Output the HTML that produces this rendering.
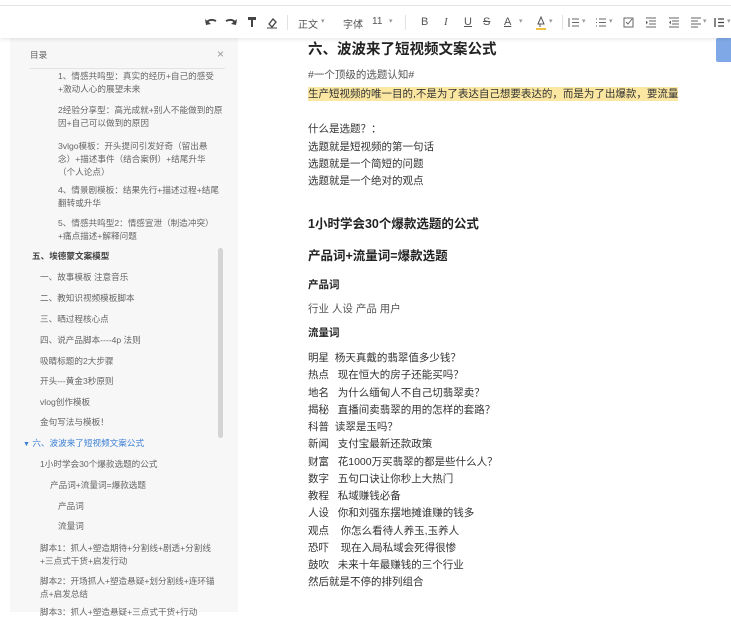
<!DOCTYPE html>
<html><head><meta charset="utf-8"><style>
*{margin:0;padding:0;box-sizing:border-box}
body{width:731px;height:612px;overflow:hidden;background:#fff;font-family:"Liberation Sans","Noto Sans CJK SC",sans-serif;position:relative}
.top{position:absolute;left:0;top:5px;width:731px;height:33px;background:#fff;border-top:1px solid #e4e4e4;box-shadow:0 2px 3px rgba(0,0,0,.08);z-index:2}
.t{position:absolute;top:10px;font-size:10px;color:#555;white-space:nowrap}
.dd{position:absolute;top:11px;font-size:7px;color:#999}
.sep{position:absolute;top:9px;width:1px;height:15px;background:#e2e2e2}
.side{position:absolute;left:10px;top:38px;width:228px;height:574px;background:#f7f7f7}
.s{position:absolute;font-size:8.6px;color:#666;line-height:13px;white-space:nowrap}
.thumb{position:absolute;left:208px;top:210px;width:5px;height:190px;border-radius:3px;background:#d4d4d4}
.m{position:absolute;left:308px;font-size:10.5px;color:#333;white-space:nowrap;line-height:14px}
.blue{position:absolute;left:716px;top:38px;width:15px;height:24px;background:#7fa9e6;border-radius:2px 0 0 2px}
.ic{position:absolute;top:11px}
</style></head><body>
<div class="top">
<svg class="ic" style="left:204px;top:10px" width="14" height="12"><path d="M2 7 Q6 2 12 5" stroke="#444" stroke-width="2" fill="none"/><path d="M1 3 L2 9 L7 8Z" fill="#444"/></svg>
<svg class="ic" style="left:224px;top:10px" width="14" height="12"><path d="M12 7 Q8 2 2 5" stroke="#444" stroke-width="2" fill="none"/><path d="M13 3 L12 9 L7 8Z" fill="#444"/></svg>
<svg class="ic" style="left:247px;top:10px" width="10" height="13"><rect x="1" y="1" width="8" height="3" fill="#444"/><rect x="4" y="4" width="2" height="7" fill="#444"/></svg>
<svg class="ic" style="left:266px;top:10px" width="12" height="13"><path d="M3 8 L7 3 L10 6 L6 11Z" stroke="#444" fill="none" stroke-width="1.3"/><path d="M1 12 H11" stroke="#444"/></svg>
<div class="sep" style="left:287px"></div>
<div class="t" style="left:298px">正文</div><div class="dd" style="left:321px">▾</div>
<div class="t" style="left:343px">字体</div><div class="dd" style="left:359px">▾</div>
<div class="t" style="left:372px">11</div><div class="dd" style="left:389px">▾</div>
<div class="sep" style="left:405px"></div>
<div class="t" style="left:421px;font-size:11px">B</div>
<div class="t" style="left:444px;font-size:11px;font-style:italic;font-family:'Liberation Serif',serif">I</div>
<div class="t" style="left:464px;font-size:11px;text-decoration:underline">U</div>
<div class="t" style="left:483px;font-size:11px;text-decoration:line-through">S</div>
<div class="t" style="left:504px;font-size:11px;text-decoration:underline">A</div><div class="dd" style="left:519px">▾</div>
<svg class="ic" style="left:535px;top:9px" width="12" height="15"><path d="M3 9 L6 2 L9 9Z M5 9 V12" stroke="#555" fill="none"/><path d="M1 14 H11" stroke="#f0c040" stroke-width="2"/></svg><div class="dd" style="left:549px">▾</div>
<div class="sep" style="left:562px"></div>
<svg class="ic" style="left:568px" width="12" height="11"><path d="M1 1V10M4 2H11M4 5.5H11M4 9H11" stroke="#666"/></svg><div class="dd" style="left:582px">▾</div>
<svg class="ic" style="left:595px" width="12" height="11"><path d="M1 2H2M1 5.5H2M1 9H2M4 2H11M4 5.5H11M4 9H11" stroke="#666"/></svg><div class="dd" style="left:609px">▾</div>
<svg class="ic" style="left:623px" width="11" height="11"><rect x="1" y="1" width="9" height="9" stroke="#666" fill="none"/><path d="M3 5L5 7L9 2" stroke="#666" fill="none"/></svg>
<svg class="ic" style="left:645px" width="12" height="11"><path d="M1 1H11M4 4H11M4 7H11M1 10H11" stroke="#666"/><path d="M1 3.5L3 5.5L1 7.5Z" fill="#666"/></svg>
<svg class="ic" style="left:668px" width="12" height="11"><path d="M1 1H11M4 4H11M4 7H11M1 10H11" stroke="#666"/><path d="M3 3.5L1 5.5L3 7.5Z" fill="#666"/></svg>
<svg class="ic" style="left:690px" width="12" height="11"><path d="M1 1H11M1 4H8M1 7H11M1 10H8" stroke="#666"/></svg><div class="dd" style="left:703px">▾</div>
<svg class="ic" style="left:713px" width="12" height="11"><path d="M2 1V10M5 2H11M5 5.5H11M5 9H11" stroke="#444" stroke-width="1.3"/></svg><div class="dd" style="left:727px">▾</div>
</div>
<div class="blue"></div>
<div class="side">
<div class="s" style="left:20px;top:11px">目录</div>
<div class="s" style="left:207px;top:10px;font-size:12px;color:#999">×</div>
<div style="position:absolute;left:20px;top:30px;width:195px;height:1px;background:#e3e3e3"></div>
<div class="s" style="left:48px;top:32px">1、情感共鸣型：真实的经历+自己的感受<br>+激动人心的展望未来</div>
<div class="s" style="left:48px;top:66px">2经验分享型：高光成就+别人不能做到的原<br>因+自己可以做到的原因</div>
<div class="s" style="left:48px;top:102px">3vlgo模板：开头提问引发好奇（留出悬<br>念）+描述事件（结合案例）+结尾升华<br>（个人论点）</div>
<div class="s" style="left:48px;top:146px">4、情景剧模板：结果先行+描述过程+结尾<br>翻转或升华</div>
<div class="s" style="left:48px;top:179px">5、情感共鸣型2：情感宣泄（制造冲突）<br>+痛点描述+解释问题</div>
<div class="s" style="left:22px;top:212px;font-weight:bold;color:#444">五、埃德蒙文案模型</div>
<div class="s" style="left:30px;top:233px">一、故事模板 注意音乐</div>
<div class="s" style="left:30px;top:254px">二、教知识视频模板脚本</div>
<div class="s" style="left:30px;top:275px">三、晒过程核心点</div>
<div class="s" style="left:30px;top:296px">四、说产品脚本----4p 法则</div>
<div class="s" style="left:30px;top:317px">吸睛标题的2大步骤</div>
<div class="s" style="left:30px;top:337px">开头---黄金3秒原则</div>
<div class="s" style="left:30px;top:358px">vlog创作模板</div>
<div class="s" style="left:30px;top:378px">金句写法与模板！</div>
<div class="s" style="left:13px;top:399px;color:#3a7fd5"><span style="font-size:7px">▼</span> 六、波波来了短视频文案公式</div>
<div class="s" style="left:30px;top:420px">1小时学会30个爆款选题的公式</div>
<div class="s" style="left:40px;top:441px">产品词+流量词=爆款选题</div>
<div class="s" style="left:48px;top:462px">产品词</div>
<div class="s" style="left:48px;top:482px">流量词</div>
<div class="s" style="left:30px;top:504px">脚本1：抓人+塑造期待+分割线+剧透+分割线<br>+三点式干货+启发行动</div>
<div class="s" style="left:30px;top:537px">脚本2：开场抓人+塑造悬疑+划分割线+连环锚<br>点+启发总结</div>
<div class="s" style="left:30px;top:568px">脚本3：抓人+塑造悬疑+三点式干货+行动</div>
<div class="thumb"></div>
</div>
<div class="m" style="top:41px;font-size:14.5px;font-weight:bold;color:#222;line-height:18px">六、波波来了短视频文案公式</div>
<div class="m" style="top:68px;color:#555">#一个顶级的选题认知#</div>
<div class="m" style="top:87px;background:#fbe7a1;color:#333">生产短视频的唯一目的,不是为了表达自己想要表达的，而是为了出爆款，要流量</div>
<div class="m" style="top:122px">什么是选题？：</div>
<div class="m" style="top:140px">选题就是短视频的第一句话</div>
<div class="m" style="top:157px">选题就是一个简短的问题</div>
<div class="m" style="top:174px">选题就是一个绝对的观点</div>
<div class="m" style="top:216px;font-size:12.5px;font-weight:bold;color:#222;line-height:16px">1小时学会30个爆款选题的公式</div>
<div class="m" style="top:248px;font-size:12.5px;font-weight:bold;color:#222;line-height:16px">产品词+流量词=爆款选题</div>
<div class="m" style="top:278px;font-weight:bold;color:#222">产品词</div>
<div class="m" style="top:302px;color:#555">行业 人设 产品 用户</div>
<div class="m" style="top:326px;font-weight:bold;color:#222">流量词</div>
<div class="m" style="top:350px;line-height:17.25px">明星&nbsp; 杨天真戴的翡翠值多少钱？<br>热点&nbsp;&nbsp; 现在恒大的房子还能买吗？<br>地名&nbsp;&nbsp; 为什么缅甸人不自己切翡翠卖？<br>揭秘&nbsp;&nbsp; 直播间卖翡翠的用的怎样的套路？<br>科普&nbsp; 读翠是玉吗？<br>新闻&nbsp;&nbsp; 支付宝最新还款政策<br>财富&nbsp;&nbsp; 花1000万买翡翠的都是些什么人？<br>数字&nbsp;&nbsp; 五句口诀让你秒上大热门<br>教程&nbsp;&nbsp; 私域赚钱必备<br>人设&nbsp;&nbsp; 你和刘强东摆地摊谁赚的钱多<br>观点&nbsp;&nbsp;&nbsp; 你怎么看待人养玉,玉养人<br>恐吓&nbsp;&nbsp;&nbsp; 现在入局私域会死得很惨<br>鼓吹&nbsp;&nbsp; 未来十年最赚钱的三个行业<br>然后就是不停的排列组合</div>
</body></html>
